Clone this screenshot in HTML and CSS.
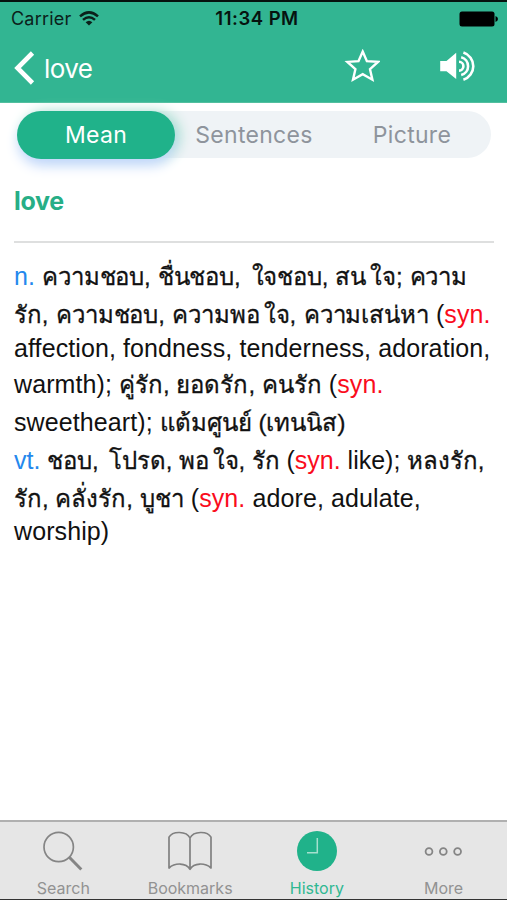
FILE: index.html
```html
<!DOCTYPE html>
<html lang="th">
<head>
<meta charset="utf-8">
<title>love</title>
<link rel="stylesheet" href="styles.css">
</head>
<body>
<div class="app">
  <header class="header">
    <div class="status">
      <div class="carrier"><span>Carrier</span>
        <svg width="20" height="15" viewBox="0 0 20 15"><g fill="none" stroke="#0b211b" stroke-width="2.5"><path d="M1 5.4Q10-2.7 19 5.4"/><path d="M4 8.9Q10 3.5 16 8.9"/></g><path d="M6.6 11.2Q10 8.2 13.4 11.2L10 14.6Z" fill="#0b211b"/></svg>
      </div>
      <div class="time">11:34 PM</div>
      <svg class="battery" width="39" height="16" viewBox="0 0 39 16"><rect x=".5" y=".5" width="35" height="15" rx="2.5"/><path d="M36.5 5q2.5 1 2.5 3t-2.5 3z"/></svg>
    </div>
    <nav class="nav">
      <svg class="back" width="22" height="34" viewBox="0 0 22 34"><path d="M19.5 2L4.5 17L19.5 32" fill="none" stroke="#fff" stroke-width="4.6"/></svg>
      <span class="title">love</span>
      <svg class="star" width="36" height="34" viewBox="0 0 36 34"><path d="M18.7 2.6L22.9 12.2L34 12.9L26 20.2L28.4 30.7L18.7 25.2L9 30.7L11.4 20.2L3.4 12.9L14.5 12.2Z" fill="none" stroke="#fff" stroke-width="2.4"/></svg>
      <svg class="speaker" width="37" height="32" viewBox="0 0 37 32"><path d="M1.2 11H7.5L17.2 2.7V28.9L7.5 21.3H1.2Z" fill="#fff"/><g fill="none" stroke="#fff" stroke-width="2.6"><path d="M20 11.8A4.4 4.4 0 0 1 20 20.6"/><path d="M22.2 7.3A9.2 9.2 0 0 1 22.2 25.1"/><path d="M24.4 2.6A14.3 14.3 0 0 1 24.4 29.8"/></g></svg>
    </nav>
  </header>
  <main class="main">
    <div class="tabs"><div class="tab active">Mean</div><div class="tab">Sentences</div><div class="tab">Picture</div></div>
    <h1 class="word">love</h1>
    <div class="definition">
      <p class="l1"><span class="pos">n.</span> <span class="th">ความชอบ, ชื่นชอบ, <span class="ai">ใจ</span>ชอบ, สน<span class="ai">ใจ</span>; ความ</span></p>
      <p class="l2"><span class="th">รัก, ความชอบ, ความพอ<span class="ai">ใจ</span>, ความเสน่หา</span> (<span class="syn">syn.</span></p>
      <p class="l3">affection, fondness, tenderness, adoration,</p>
      <p class="l4">warmth); <span class="th">คู่รัก, ยอดรัก, คนรัก</span> (<span class="syn">syn.</span></p>
      <p class="l5">sweetheart); <span class="th">แต้มศูนย์ (เทนนิส)</span></p>
      <p class="l6"><span class="pos">vt.</span> <span class="th">ชอบ, <span class="ai">โปรด</span>, พอ<span class="ai">ใจ</span>, รัก</span> (<span class="syn">syn.</span> like); <span class="th">หลงรัก,</span></p>
      <p class="l7"><span class="th">รัก, คลั่งรัก, บูชา</span> (<span class="syn">syn.</span> adore, adulate,</p>
      <p class="l8">worship)</p>
    </div>
  </main>
  <footer class="bar">
    <div class="item"><svg width="42" height="42" viewBox="0 0 42 42"><g fill="none" stroke="#858585"><circle cx="16.7" cy="17" r="14.7" stroke-width="1.7"/><path d="M27.3 27.3L39.3 39.5" stroke-width="3"/></g></svg><span>Search</span></div>
    <div class="item"><svg width="46" height="42" viewBox="0 0 46 42"><path d="M23 39.3C19 32.5 8 32.5 2 38V7.2C5.5 .8 19.5 .8 23 8C26.5 .8 40.5 .8 44 7.2V38C38 32.5 27 32.5 23 39.3V8" fill="none" stroke="#808080" stroke-width="1.7" stroke-linejoin="round"/></svg><span>Bookmarks</span></div>
    <div class="item on"><svg width="42" height="42" viewBox="0 0 42 42"><circle cx="21" cy="21" r="20" fill="#20b28a"/><path d="M21.3 8V22.8H11" fill="none" stroke="#a5e0ce" stroke-width="1.5"/></svg><span>History</span></div>
    <div class="item"><svg width="42" height="42" viewBox="0 0 42 42"><g fill="none" stroke="#858585" stroke-width="1.8"><circle cx="6" cy="21.5" r="3.4"/><circle cx="20.3" cy="21.5" r="3.4"/><circle cx="34.6" cy="21.5" r="3.4"/></g></svg><span>More</span></div>
  </footer>
</div>
</body>
</html>
```
FILE: styles.css
```css
* { box-sizing: border-box; }
body { margin: 0; background: #fff; font-family: Inter, "Liberation Sans", sans-serif; }
svg { display: block; flex: none; }
.app { height: 900px; display: flex; flex-direction: column; overflow: hidden; border-bottom: 1px solid #333; }
.header { height: 103px; flex: none; background: #32b592; border-top: 2px solid #06130f; border-bottom: 1px solid #52bf9f; }
.status { display: grid; grid-template-columns: 1fr auto 1fr; align-items: center; height: 32px; padding: 0 9px 0 11px; color: #0b211b; font-size: 18px; line-height: 33px; }
.carrier { display: flex; align-items: center; gap: 8px; letter-spacing: .2px; }
.time { font-size: 18.5px; font-weight: 600; letter-spacing: .5px; color: #06130f; padding-left: 5px; }
.battery { justify-self: end; }
.nav { display: flex; align-items: center; height: 68px; padding: 0 31px 0 13px; }
.title { flex: 1; margin-left: 9px; color: #fff; font-size: 26px; letter-spacing: -.6px; }
.star { margin: 0 59px 4px 0; }
.speaker { margin-bottom: 4px; }
.main { flex: 1; padding: 8px 13px 0 14px; }
.tabs { display: grid; grid-template-columns: repeat(3, 1fr); height: 47px; margin: 0 3px 0 3px; border-radius: 24px; background: #eff3f6; }
.tab { text-align: center; font-size: 23px; line-height: 48px; color: #8e949c; font-weight: 400; letter-spacing: .3px; border-radius: 24px; }
.active { color: #fff; background: #20b28a; box-shadow: 0 8px 14px -2px #c5d6ff, 5px 0 14px -1px #9bdcc9; }
.word { margin: 0; height: 85px; padding-top: 26px; border-bottom: 2px solid #dedfdf; color: #27ae86; font-size: 25px; line-height: 34px; font-weight: 700; letter-spacing: -.3px; }
.definition { padding-top: 16px; font: 25px/34px "Liberation Sans", sans-serif; letter-spacing: .1px; color: #111; }
.definition p { margin: 0; height: 38px; white-space: nowrap; }
.definition .l2 { height: 34px; }
.definition .l3 { height: 36px; }
.definition .l7 { height: 33px; }
.th { font-size: 24px; letter-spacing: 0; -webkit-text-stroke: .3px #111; }
.ai { margin-left: 4px; }
.l1 .th { letter-spacing: -.15px; word-spacing: .6px; }
.l2 .th { letter-spacing: -.1px; word-spacing: 1px; }
.l6 { letter-spacing: 0; }
.l6 .th { letter-spacing: -.1px; }
.pos { color: #2488ed; }
.syn { color: #fa0c1c; }
.bar { height: 79px; flex: none; display: grid; grid-template-columns: repeat(4, 1fr); background: #e6e6e6; border-top: 2px solid #b0b0b0; }
.item { display: flex; flex-direction: column; align-items: center; padding-top: 8px; color: #929292; font-size: 16px; line-height: 20px; letter-spacing: 0; }
.item span { margin-top: 6px; }
.on { color: #2fb892; }
```
